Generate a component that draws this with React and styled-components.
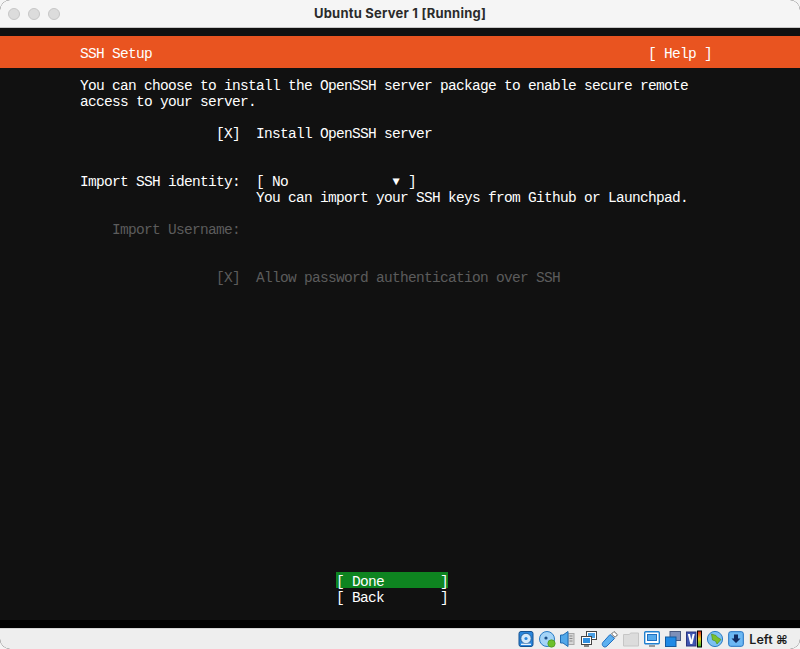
import React from "react";
import styled, { createGlobalStyle } from "styled-components";

const GlobalStyle = createGlobalStyle`
  html, body {
    margin: 0;
    padding: 0;
    background: #f4f4f4;
  }
`;

const Window = styled.div`
  width: 800px;
  height: 649px;
  display: flex;
  flex-direction: column;
  overflow: hidden;
  border-radius: 10px;
  background: #000;
`;

const TitleBar = styled.div`
  position: relative;
  height: 27px;
  flex: none;
  display: flex;
  align-items: center;
  justify-content: center;
  background: #f5f5f5;
  border-bottom: 1px solid #c8c8c8;
`;

const Lights = styled.div`
  position: absolute;
  left: 8px;
  top: 8px;
  display: flex;
  gap: 8px;
`;

const Light = styled.span`
  width: 12px;
  height: 12px;
  border-radius: 50%;
  box-sizing: border-box;
  background: #dcdcdc;
  border: 1px solid #c6c6c6;
`;

const Title = styled.div`
  font-family: Inter, "Liberation Sans", sans-serif;
  font-weight: 700;
  font-size: 13px;
  letter-spacing: 0.22px;
  color: #2b2b2b;
  margin-top: -1px;
`;

const Screen = styled.div`
  flex: 1;
  display: flex;
  flex-direction: column;
  padding-top: 8px;
  background: #111;
  color: #fff;
  font-family: "Liberation Mono", monospace;
  font-size: 14.5px;
  letter-spacing: -0.7px;
  line-height: 20px;
`;

const Header = styled.div`
  display: flex;
  justify-content: space-between;
  height: 16px;
  padding: 8px 88px 8px 80px;
  background: #e95420;
`;

const Body = styled.div`
  flex: 1;
  padding: 8px 0 0 80px;
`;

const Line = styled.div`
  white-space: pre;
  height: 16px;
  margin-top: ${(p) => (p.$gap || 0) * 16}px;
  color: ${(p) => (p.$dim ? "#5c5c5c" : "#fff")};
`;

const Arrow = styled.span`
  display: inline-block;
  width: 8px;
  text-align: center;
  font-size: 12px;
  letter-spacing: 0;
  vertical-align: 1px;
`;

const Footer = styled.div`
  padding: 0 0 16px 336px;
`;

const Button = styled.div`
  width: 112px;
  height: 16px;
  white-space: pre;
  background: ${(p) => (p.$active ? "#0e8420" : "transparent")};
`;

const Gutter = styled.div`
  height: 8px;
  flex: none;
  background: #000;
`;

const StatusBar = styled.div`
  height: 21px;
  flex: none;
  display: flex;
  align-items: center;
  justify-content: flex-end;
  gap: 5px;
  padding-right: 12px;
  background: #eeeeee;
  border-top: 1px solid #d4d4d4;
  box-sizing: border-box;
`;

const HostKey = styled.span`
  font-family: Inter, "Liberation Sans", sans-serif;
  font-weight: 600;
  font-size: 12.5px;
  color: #1c1c1c;
`;

const Icon = styled.svg`
  display: block;
  flex: none;
  width: 16px;
  height: 16px;
  overflow: visible;
`;

const HddIcon = () => (
  <Icon viewBox="0 0 16 16">
    <rect x="1" y="0.5" width="14" height="15" rx="2" fill="#2a86dc" stroke="#14508f" />
    <circle cx="8" cy="7.5" r="5.2" fill="#d4e9fa" stroke="#14508f" strokeWidth="0.8" />
    <circle cx="8" cy="7.5" r="1.6" fill="#2a86dc" />
    <path d="M3 13.3h10" stroke="#fff" strokeWidth="1.2" />
  </Icon>
);

const DiscIcon = () => (
  <Icon viewBox="0 0 16 16">
    <circle cx="8" cy="8" r="7.5" fill="#a4d4f7" stroke="#2a7cc4" />
    <circle cx="7" cy="7" r="1.6" fill="#1c4f86" />
    <circle cx="12.5" cy="12.5" r="3.7" fill="#6cc02c" stroke="#3f8a14" strokeWidth="0.6" />
  </Icon>
);

const AudioIcon = () => (
  <Icon viewBox="0 0 16 16">
    <rect x="8" y="2.5" width="6" height="11" fill="#d6d6d6" stroke="#a8a8a8" />
    <path d="M9.5 5h3M9.5 7.5h3M9.5 10h3" stroke="#8a8a8a" />
    <path d="M.5 4H3L8 .5v15L3 12H.5z" fill="#52a8ea" stroke="#1f6cb3" />
  </Icon>
);

const NetworkIcon = () => (
  <Icon viewBox="0 0 16 16">
    <rect x="5.5" y="0.5" width="10" height="8" fill="#fff" stroke="#444" />
    <rect x="7" y="2" width="7" height="5" fill="#4a9fe4" />
    <rect x="0.5" y="5.5" width="10" height="8" fill="#fff" stroke="#444" />
    <rect x="2" y="7" width="7" height="5" fill="#2f8fe0" />
    <path d="M3 15h5" stroke="#555" strokeWidth="1.4" />
  </Icon>
);

const UsbIcon = () => (
  <Icon viewBox="0 0 16 16">
    <path d="M.8 11.5 8 3.5l4.5 4L5 15c-1.400 1.300-2.800 1.300-3.800.3S-.1 12.800.8 11.500z" fill="#5db0f0" stroke="#1f6fc0" />
    <path d="m9.5 3 2.500-2.500 3.500 3.300-2.400 2.500z" fill="#fff" stroke="#666" />
  </Icon>
);

const FolderIcon = () => (
  <Icon viewBox="0 0 16 16">
    <path d="M.5 3.5h6l1-1.500h8v13H.5z" fill="#dcdcdc" stroke="#c6c6c6" />
  </Icon>
);

const DisplayIcon = () => (
  <Icon viewBox="0 0 16 16">
    <rect x="0.7" y="0.7" width="14.6" height="12" rx="1" fill="#fff" stroke="#1f80d0" strokeWidth="1.4" />
    <rect x="3.5" y="3.5" width="9" height="6" fill="#55abec" stroke="#1f6fc0" />
    <path d="M5 15h6" stroke="#777" strokeWidth="1.4" />
  </Icon>
);

const CaptureIcon = () => (
  <Icon viewBox="0 0 16 16">
    <rect x="5" y="0.5" width="10.5" height="9" fill="#7d8fb8" stroke="#4a5a80" />
    <rect x="0.5" y="6" width="10.5" height="9.5" fill="#1f8ae6" stroke="#145a9e" />
  </Icon>
);

const CpuIcon = () => (
  <Icon viewBox="0 0 16 16">
    <defs>
      <linearGradient id="meter" x1="0" y1="0" x2="0" y2="1">
        <stop offset="0" stopColor="#e02020" />
        <stop offset="0.5" stopColor="#e8d020" />
        <stop offset="1" stopColor="#30b030" />
      </linearGradient>
    </defs>
    <rect x="0.5" y="1" width="9.500" height="14" fill="#3f55b0" stroke="#2a3580" />
    <path d="M1.800 3h2.200l1.300 6 1.300-6h2.100L6.300 13H4.300z" fill="#fff" />
    <rect x="11.500" y="0" width="4" height="16" fill="url(#meter)" stroke="#000" />
  </Icon>
);

const GlobeIcon = () => (
  <Icon viewBox="0 0 16 16">
    <circle cx="8" cy="8" r="7.6" fill="#7cc0f2" stroke="#2a7cc4" />
    <path d="M4.500 3 9 4.500l1 1.500 4 2.500-4 4.500-1.500-3-3-1z" fill="#7cc02c" stroke="#4a8a14" strokeWidth="0.6" />
  </Icon>
);

const DownloadIcon = () => (
  <Icon viewBox="0 0 16 16">
    <rect x="0.7" y="0.7" width="14.6" height="14.6" rx="2" fill="#6cb8f4" stroke="#1f6fc0" />
    <path d="M6 3.500h4v4h2.500L8 12 3.500 7.500H6z" fill="#102a60" />
  </Icon>
);

const App = () => (
  <>
    <GlobalStyle />
    <Window>
      <TitleBar>
        <Lights>
          <Light />
          <Light />
          <Light />
        </Lights>
        <Title>Ubuntu Server 1 [Running]</Title>
      </TitleBar>
      <Screen>
        <Header>
          <span>SSH Setup</span>
          <span>[ Help ]</span>
        </Header>
        <Body>
          <Line>You can choose to install the OpenSSH server package to enable secure remote</Line>
          <Line>access to your server.</Line>
          <Line $gap={1}>{"                 [X]  Install OpenSSH server"}</Line>
          <Line $gap={2}>
            {"Import SSH identity:  [ No             "}
            <Arrow>▼</Arrow>
            {" ]"}
          </Line>
          <Line>{"                      You can import your SSH keys from Github or Launchpad."}</Line>
          <Line $gap={1} $dim>{"    Import Username:"}</Line>
          <Line $gap={2} $dim>{"                 [X]  Allow password authentication over SSH"}</Line>
        </Body>
        <Footer>
          <Button $active>{"[ Done       ]"}</Button>
          <Button>{"[ Back       ]"}</Button>
        </Footer>
      </Screen>
      <Gutter />
      <StatusBar>
        <HddIcon />
        <DiscIcon />
        <AudioIcon />
        <NetworkIcon />
        <UsbIcon />
        <FolderIcon />
        <DisplayIcon />
        <CaptureIcon />
        <CpuIcon />
        <GlobeIcon />
        <DownloadIcon />
        <HostKey>Left ⌘</HostKey>
      </StatusBar>
    </Window>
  </>
);

export default App;
